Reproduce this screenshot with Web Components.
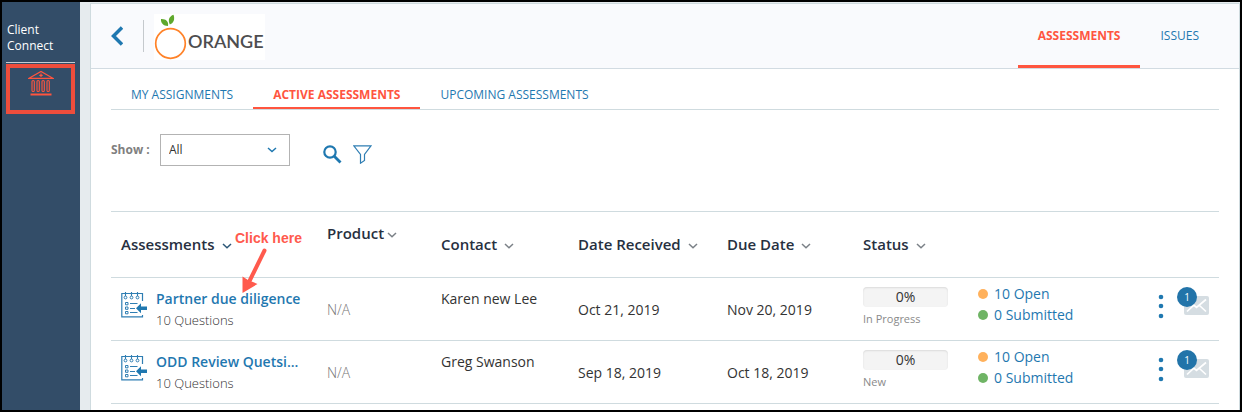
<!DOCTYPE html>
<html lang="en">
<head>
<meta charset="utf-8">
<meta name="viewport" content="width=device-width, initial-scale=1">
<title>Client Connect – Assessments</title>
<style>
  :root {
    --blue: #1f78b0;
    --red: #ff553f;
    --navy: #334d68;
    --line: #cfdbdf;
    --ink: #333;
    --muted: #8a8a8a;
  }
  body { margin: 0; font: 14px/20px "Open Sans", "Noto Sans", sans-serif; color: var(--ink); background: #fff; }
</style>
</head>
<body>
<client-app>
  <side-bar slot="side" heading="Client Connect"></side-bar>
  <brand-header slot="main">
    <nav-tab kind="top" active>ASSESSMENTS</nav-tab>
    <nav-tab kind="top">ISSUES</nav-tab>
  </brand-header>
  <tab-strip slot="main">
    <nav-tab>MY ASSIGNMENTS</nav-tab>
    <nav-tab active>ACTIVE ASSESSMENTS</nav-tab>
    <nav-tab>UPCOMING ASSESSMENTS</nav-tab>
  </tab-strip>
  <filter-bar slot="main"></filter-bar>
  <assessment-table slot="main"></assessment-table>
</client-app>

<script>
function define(name, html, setup) {
  const template = document.createElement('template');
  template.innerHTML = html;
  customElements.define(name, class extends HTMLElement {
    constructor() {
      super();
      this.attachShadow({ mode: 'open' }).append(template.content.cloneNode(true));
    }
    connectedCallback() { if (setup) setup(this, this.shadowRoot); }
  });
}

define('client-app', `
  <style>
    :host { display: grid; grid-template-columns: 78px 1fr; box-sizing: border-box; min-height: 100vh; border: 2px solid #000; }
    .side { background: var(--navy); }
    main { background: #e6ebee; padding: 1px 0 0 10px; display: grid; min-width: 0; }
    .panel { background: #fff; border: 1px solid var(--line); border-bottom: 0; min-width: 0; }
  </style>
  <div class="side"><slot name="side"></slot></div>
  <main><div class="panel"><slot name="main"></slot></div></main>`);

define('side-bar', `
  <style>
    :host { display: block; padding: 20px 5px 0 4px; color: #fff; }
    h2 { margin: 0; padding: 0 1px 8px; font-size: 12px; line-height: 16px; font-weight: 400; border-bottom: 1px solid #c3ccd4; }
    a { display: flex; justify-content: center; box-sizing: border-box; height: 50px; margin-top: 1px; padding-top: 2px; border: 4px solid #ee4d3c; }
    svg { display: block; }
  </style>
  <h2></h2>
  <a href="#" aria-label="Institutions">
    <svg width="26" height="26" viewBox="0 0 26 26" fill="none" stroke="#ff553f">
      <path d="M1 8.300 13 1.500l12 6.800zM13 3.500v3.500M11.300 5.300h3.400" stroke-width="1.200"/>
      <g stroke-width="1.100">
        <rect x="4" y="10.500" width="2.300" height="11" rx="1.100"/>
        <rect x="9" y="10.500" width="2.300" height="11" rx="1.100"/>
        <rect x="14" y="10.500" width="2.300" height="11" rx="1.100"/>
        <rect x="19" y="10.500" width="2.300" height="11" rx="1.100"/>
      </g>
      <path d="M2.500 24.500h21" stroke-width="2"/>
    </svg>
  </a>`, (el, root) => { root.querySelector('h2').textContent = el.getAttribute('heading'); });

define('nav-tab', `
  <style>
    :host { display: block; }
    a { display: block; box-sizing: border-box; height: 30px; padding: 0 20px; border-bottom: 2px solid transparent;
        font-size: 12px; line-height: 32px; color: var(--blue); text-decoration: none; white-space: nowrap; }
    :host([kind="top"]) a { height: 64px; line-height: 64px; border-bottom-width: 3px; }
    :host([active]) a { font-weight: 700; color: var(--red); border-bottom-color: var(--red); }
  </style>
  <a href="#"><slot></slot></a>`);

define('brand-header', `
  <style>
    :host { display: flex; align-items: center; height: 64px; padding: 0 20px; background: #f9fafd; border-bottom: 1px solid #d2dbe2; }
    button { border: 0; padding: 0; background: none; }
    svg { display: block; }
    .rule { width: 1px; height: 32px; margin: 0 10px 0 20px; background: #c5c9cd; }
    .logo { display: flex; align-items: center; width: 111px; height: 46px; margin-top: 2px; background: #fff; color: #4d4d4f;
            font: 600 18px/20px Lato, sans-serif; }
    .logo span { padding-top: 8px; }
    nav { display: flex; margin-left: auto; align-self: stretch; }
  </style>
  <button aria-label="Back">
    <svg width="12" height="20" viewBox="0 0 12 20" fill="none" stroke="#1f78b0" stroke-width="3.500"><path d="M11 1.500 2.500 10l8.500 8.500"/></svg>
  </button>
  <span class="rule"></span>
  <div class="logo">
    <svg width="34" height="46" viewBox="0 0 34 46">
      <circle cx="16.500" cy="29.500" r="14.800" fill="none" stroke="#ff8228" stroke-width="1.700"/>
      <path d="M14 12C9 12 6.500 8.500 7 5c5-.3 7.800 2.500 7 7z" fill="#5fa82c"/>
      <path d="M15.800 10.500C13.500 6 15.500 2 19.500.800 21 5 20 9 15.800 10.500z" fill="#5fa82c"/>
    </svg>
    <span>ORANGE</span>
  </div>
  <nav><slot></slot></nav>`);

define('tab-strip', `
  <style>
    :host { display: flex; margin: 10px 20px 0; border-bottom: 1px solid var(--line); }
  </style>
  <slot></slot>`);

define('filter-bar', `
  <style>
    :host { display: flex; align-items: center; margin: 24px 20px 0; height: 32px; }
    label { font-size: 12px; font-weight: 700; color: #808080; width: 49px; }
    .pick { display: grid; align-items: center; width: 130px; height: 32px; }
    select { grid-area: 1 / 1; appearance: none; box-sizing: border-box; width: 100%; height: 100%; border: 1px solid #b3b3b3; border-radius: 0;
             padding: 0 8px; background: #fff; font: inherit; font-size: 12px; color: var(--ink); }
    .pick svg { grid-area: 1 / 1; justify-self: end; margin-right: 13px; pointer-events: none; }
    button { border: 0; padding: 0; background: none; margin: 8px 0 0 11px; }
    button:first-of-type { margin-left: 33px; }
    svg { display: block; }
  </style>
  <label for="show">Show :</label>
  <div class="pick">
    <select id="show"><option>All</option></select>
    <svg width="10" height="6" viewBox="0 0 10 6" fill="none" stroke="#1f78b0" stroke-width="1.500"><path d="M1 1l4 3.500L9 1"/></svg>
  </div>
  <button aria-label="Search">
    <svg width="19" height="19" viewBox="0 0 19 19" fill="none" stroke="#1f78b0"><circle cx="7" cy="7" r="5.700" stroke-width="2.200"/><path d="M11 11l6.500 6.500" stroke-width="2.800"/></svg>
  </button>
  <button aria-label="Filter">
    <svg width="19" height="19" viewBox="0 0 19 19" fill="none" stroke="#2f7eb3" stroke-width="1.200"><path d="M.8.800h17.200L11.500 9.500v6l-4 2.700V9.500z"/></svg>
  </button>`);

define('sort-label', `
  <style>
    :host { display: inline-flex; align-items: center; gap: 7px; font-size: 15px; line-height: 20px; font-weight: 600; color: #27303f; white-space: nowrap; }
    :host([tight]) { gap: 3px; }
    button { display: contents; font: inherit; color: inherit; }
    svg { display: block; margin-top: 3px; stroke: #7b8187; }
    :host([sorted]) svg { stroke: #2c5878; }
  </style>
  <button><slot></slot><svg width="10" height="6" viewBox="0 0 10 6" fill="none" stroke-width="1.500"><path d="M1 1l4 3.800L9 1"/></svg></button>`);

define('assessment-name', `
  <style>
    :host { display: grid; grid-template-columns: 26px 1fr; gap: 9px; }
    svg { display: block; margin-top: 3px; }
    a { display: block; font-size: 14px; line-height: 20px; font-weight: 600; color: var(--blue); text-decoration: none; white-space: nowrap; }
    small { display: block; font-size: 13px; line-height: 22px; font-weight: 300; }
  </style>
  <svg width="26" height="26" viewBox="0 0 26 26" fill="none" stroke="#2f7eb3">
    <path d="M21.500 9V1.500H.8v23.300h20.700V23" stroke-width="1.200"/>
    <path d="M4.500 0v4M10.500 0v4M16.500 0v4" stroke-width="1.100"/>
    <g stroke-width="1"><circle cx="4.500" cy="5.500" r="1.400"/><circle cx="10.500" cy="5.500" r="1.400"/><circle cx="16.500" cy="5.500" r="1.400"/>
    <path d="M4.500 10.500h2.500v2.300H4.500zM4.500 15h2.500v2.300H4.500zM4.500 19.500h2.500v2.300H4.500zM9 11.500h7.500M9 16.500h5M9 20.500h7.500"/></g>
    <path d="M15 16.200l5-5v3.200h6v3.600h-6v3.200z" fill="#1f78b0" stroke="none"/>
  </svg>
  <div><a href="#"><slot></slot></a><small>10 Questions</small></div>`);

define('status-meter', `
  <style>
    :host { display: block; width: 85px; }
    div { box-sizing: border-box; height: 20px; border-radius: 4px; background: #f4f4f4; box-shadow: inset 0 1px 2px rgba(0,0,0,.1); text-align: center; line-height: 20px; }
    small { display: block; font-size: 11px; line-height: 20px; margin-top: 2px; color: var(--muted); }
  </style>
  <div>0%</div><small><slot></slot></small>`);

define('item-counts', `
  <style>
    :host { display: block; }
    a { display: flex; align-items: center; gap: 6px; line-height: 21px; color: var(--blue); text-decoration: none; }
    i { width: 10px; height: 10px; border-radius: 50%; background: #6fb465; }
    i.open { background: #ffb15c; }
  </style>
  <a href="#"><i class="open"></i>10 Open</a>
  <a href="#"><i></i>0 Submitted</a>`);

define('row-actions', `
  <style>
    :host { display: flex; justify-content: flex-end; align-items: flex-start; gap: 13px; }
    button { border: 0; padding: 0; background: none; position: relative; }
    svg { display: block; }
    .menu { margin-top: 7px; }
    .mail { padding: 9px 0 0 7px; }
    b { position: absolute; left: 0; top: 0; width: 20px; height: 20px; border-radius: 50%; background: #2274a9; color: #fff;
        font: 400 10px/20px "Open Sans", sans-serif; text-align: center; }
  </style>
  <button class="menu" aria-label="More actions">
    <svg width="6" height="26" viewBox="0 0 6 26" fill="#1f78b0"><circle cx="3" cy="3" r="2.300"/><circle cx="3" cy="12" r="2.300"/><circle cx="3" cy="22" r="2.300"/></svg>
  </button>
  <button class="mail" aria-label="Messages">
    <svg width="25" height="19" viewBox="0 0 25 19"><rect width="25" height="19" rx="2" fill="#d5dde2"/><path d="M3 15.500l6.500-6M22 15.500l-6.500-6M3 3.500l9.500 8 9.500-8" fill="none" stroke="#fff" stroke-width="1.700"/></svg>
    <b>1</b>
  </button>`);

define('click-hint', `
  <style>
    :host { position: absolute; left: 124px; top: -49px; color: #ff5a4d; font: 700 14px/18px "Liberation Sans", Arial, sans-serif; white-space: nowrap; pointer-events: none; }
    svg { display: block; margin-left: 5px; }
  </style>
  <slot></slot>
  <svg width="30" height="46" viewBox="0 0 30 46"><path d="M24.500 3.500 10 33" stroke="#ff5a4d" stroke-width="4" stroke-linecap="round"/><path d="M2.500 46V29.500l5.500 3.500 9.500 4z" fill="#ff5a4d"/></svg>`);

define('assessment-table', `
  <style>
    :host { display: block; margin: 45px 20px 0; }
    table { width: 100%; table-layout: fixed; border-collapse: separate; border-spacing: 0; }
    th, td { box-sizing: border-box; padding: 0 0 0 10px; text-align: left; border-bottom: 1px solid var(--line); }
    th { height: 67px; border-top: 1px solid var(--line); font-weight: 400; }
    td { height: 63px; vertical-align: top; }
    th.high { vertical-align: top; padding-top: 11px; }
    td.name { position: relative; padding-top: 11px; }
    td.person { padding-top: 11px; }
    td.mid { vertical-align: middle; padding-top: 2px; }
    td.meter { padding-top: 9px; }
    td.counts { padding-top: 5px; }
    td.acts { padding: 9px 10px 0 0; }
    .none { font-weight: 300; color: #777; }
  </style>
  <table>
    <colgroup><col width="206"><col width="114"><col width="137"><col width="149"><col width="136"><col width="115"><col width="177"><col width="74"></colgroup>
    <thead><tr>
      <th><sort-label sorted>Assessments</sort-label></th>
      <th class="high"><sort-label tight>Product</sort-label></th>
      <th><sort-label>Contact</sort-label></th>
      <th><sort-label>Date Received</sort-label></th>
      <th><sort-label>Due Date</sort-label></th>
      <th><sort-label>Status</sort-label></th>
      <th></th><th></th>
    </tr></thead>
    <tbody></tbody>
  </table>`, (el, root) => {
  const rows = [
    ['Partner due diligence', 'Karen new Lee', 'Oct 21, 2019', 'Nov 20, 2019', 'In Progress', 'Click here'],
    ['ODD Review Quetsi...', 'Greg Swanson', 'Sep 18, 2019', 'Oct 18, 2019', 'New', '']
  ];
  root.querySelector('tbody').innerHTML = rows.map(([name, person, received, due, status, hint]) => `
    <tr>
      <td class="name"><assessment-name>${name}</assessment-name>${hint ? `<click-hint>${hint}</click-hint>` : ''}</td>
      <td class="mid none">N/A</td>
      <td class="person">${person}</td>
      <td class="mid">${received}</td>
      <td class="mid">${due}</td>
      <td class="meter"><status-meter>${status}</status-meter></td>
      <td class="counts"><item-counts></item-counts></td>
      <td class="acts"><row-actions></row-actions></td>
    </tr>`).join('');
});
</script>
</body>
</html>
